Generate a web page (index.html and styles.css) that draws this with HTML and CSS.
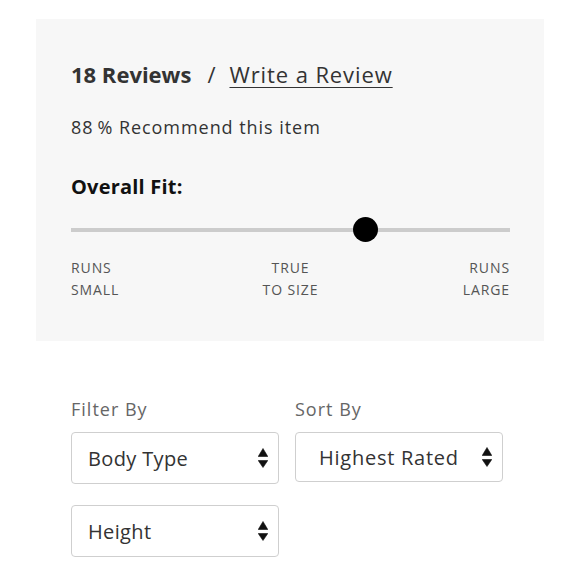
FILE: index.html
```html
<!DOCTYPE html>
<html>
<head>
<meta charset="utf-8">
<link rel="stylesheet" href="styles.css">
</head>
<body>
<section class="panel">
  <div class="head">
    <span class="count">18 Reviews</span>
    <span class="slash">/</span>
    <a class="write" href="#">Write a Review</a>
  </div>
  <p class="recommend">88&#8201;% Recommend this item</p>
  <h3 class="fit-title">Overall Fit:</h3>
  <div class="track"><span class="knob"></span></div>
  <div class="scale">
    <span class="lbl left">RUNS<br>SMALL</span>
    <span class="lbl mid">TRUE<br>TO SIZE</span>
    <span class="lbl right">RUNS<br>LARGE</span>
  </div>
</section>
<section class="filters">
  <div class="col">
    <div class="caption">Filter By</div>
    <div class="select">
      <span>Body Type</span>
      <svg class="arrows" width="10" height="20" viewBox="0 0 10 20"><path d="M5 0.5 L9.8 8.5 L0.2 8.5 Z M0.2 12.5 L9.8 12.5 L5 19.5 Z" fill="#111" stroke="#111" stroke-width="0.6" stroke-linejoin="round"/></svg>
    </div>
    <div class="select">
      <span>Height</span>
      <svg class="arrows" width="10" height="20" viewBox="0 0 10 20"><path d="M5 0.5 L9.8 8.5 L0.2 8.5 Z M0.2 12.5 L9.8 12.5 L5 19.5 Z" fill="#111" stroke="#111" stroke-width="0.6" stroke-linejoin="round"/></svg>
    </div>
  </div>
  <div class="col">
    <div class="caption">Sort By</div>
    <div class="select sort">
      <span>Highest Rated</span>
      <svg class="arrows" width="10" height="20" viewBox="0 0 10 20"><path d="M5 0.5 L9.8 8.5 L0.2 8.5 Z M0.2 12.5 L9.8 12.5 L5 19.5 Z" fill="#111" stroke="#111" stroke-width="0.6" stroke-linejoin="round"/></svg>
    </div>
  </div>
</section>
</body>
</html>
```

FILE: styles.css
```css
html, body {
  margin: 0;
  padding: 0;
  background: #fff;
}
body {
  font-family: "Open Sans", "Noto Sans", sans-serif;
  color: #333;
}
.panel {
  margin: 19px 0 0 36px;
  width: 508px;
  height: 322px;
  box-sizing: border-box;
  background: #f7f7f7;
  padding: 40px 34px 0 35px;
}
.head {
  display: flex;
  align-items: baseline;
  font-size: 22px;
  line-height: 30px;
}
.count {
  font-weight: 700;
  color: #333;
}
.slash {
  margin: 0 14px 0 16px;
  color: #333;
}
.write {
  color: #333;
  letter-spacing: 0.9px;
  text-decoration: underline;
  text-underline-offset: 4px;
  text-decoration-thickness: 1px;
}
.recommend {
  margin: 26px 0 0;
  font-size: 18px;
  line-height: 24px;
  letter-spacing: 0.95px;
  color: #333;
}
.fit-title {
  margin: 35px 0 0;
  font-size: 20px;
  line-height: 26px;
  font-weight: 700;
  letter-spacing: 0.2px;
  color: #111;
}
.track {
  position: relative;
  margin-top: 28px;
  height: 4px;
  background: #cccccc;
}
.knob {
  position: absolute;
  left: 282px;
  top: -11px;
  width: 25px;
  height: 25px;
  border-radius: 50%;
  background: #000;
}
.scale {
  display: grid;
  grid-template-columns: 1fr auto 1fr;
  margin-top: 25px;
  font-size: 14px;
  line-height: 22px;
  letter-spacing: 0.9px;
  color: #555;
}
.lbl.mid { text-align: center; }
.lbl.right { text-align: right; }
.filters {
  display: flex;
  gap: 16px;
  margin: 58px 0 0 71px;
}
.col {
  display: flex;
  flex-direction: column;
  width: 208px;
  gap: 21px;
}
.caption {
  font-size: 18px;
  line-height: 20px;
  letter-spacing: 1px;
  color: #666;
  margin-bottom: -8px;
}
.select {
  box-sizing: border-box;
  height: 52px;
  border: 1px solid #cfcfcf;
  border-radius: 4px;
  background: #fff;
  display: flex;
  align-items: center;
  justify-content: space-between;
  padding: 0 10px 0 16px;
  font-size: 20px;
  letter-spacing: 0.35px;
  color: #333;
}
.select.sort {
  height: 50px;
  padding-left: 23px;
  letter-spacing: 0.75px;
}
.arrows {
  display: block;
}
```
